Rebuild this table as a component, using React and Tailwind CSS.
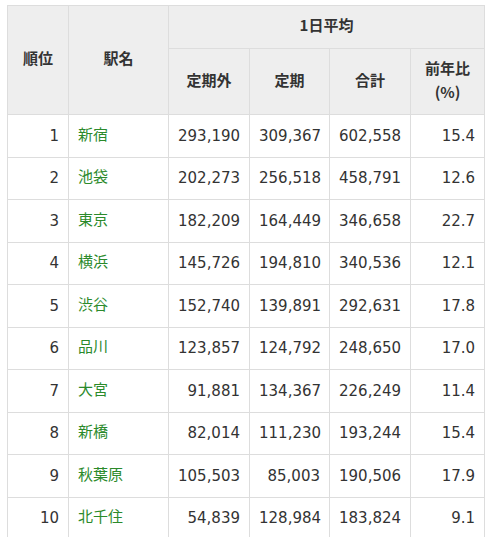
const rows = [
  [1, "新宿", "293,190", "309,367", "602,558", "15.4"],
  [2, "池袋", "202,273", "256,518", "458,791", "12.6"],
  [3, "東京", "182,209", "164,449", "346,658", "22.7"],
  [4, "横浜", "145,726", "194,810", "340,536", "12.1"],
  [5, "渋谷", "152,740", "139,891", "292,631", "17.8"],
  [6, "品川", "123,857", "124,792", "248,650", "17.0"],
  [7, "大宮", "91,881", "134,367", "226,249", "11.4"],
  [8, "新橋", "82,014", "111,230", "193,244", "15.4"],
  [9, "秋葉原", "105,503", "85,003", "190,506", "17.9"],
  [10, "北千住", "54,839", "128,984", "183,824", "9.1"],
];

const th = "border border-[#dddddd] bg-[#eeeeee] font-bold text-center align-middle pb-[4px]";
const td = "border border-[#dddddd] px-[9px] align-middle h-[42.5px]";

export default function App() {
  return (
    <div className="w-[490px] h-[537px] overflow-hidden bg-white pl-[7px] pt-[5px] text-[15px] leading-[24px] text-[#333333] font-['DejaVu_Sans','Noto_Sans_CJK_JP',sans-serif]">
      <table className="table-fixed border-collapse w-[477px]">
        <colgroup>
          <col className="w-[61px]" />
          <col className="w-[100px]" />
          <col className="w-[81px]" />
          <col className="w-[80px]" />
          <col className="w-[81px]" />
          <col className="w-[74px]" />
        </colgroup>
        <thead className="font-['Noto_Sans_CJK_JP',sans-serif] text-[15px]">
          <tr className="h-[43px]">
            <th rowSpan={2} className={th}>順位</th>
            <th rowSpan={2} className={th}>駅名</th>
            <th colSpan={4} className={th}>1日平均</th>
          </tr>
          <tr className="h-[66px]">
            <th className={th}>定期外</th>
            <th className={th}>定期</th>
            <th className={th}>合計</th>
            <th className={th}>
              前年比
              <br />
              (%)
            </th>
          </tr>
        </thead>
        <tbody>
          {rows.map((r) => (
            <tr key={r[0]}>
              <td className={`${td} text-right`}>{r[0]}</td>
              <td className={`${td} pb-[4px] text-left text-[#2b8a2b] font-['Noto_Sans_CJK_JP',sans-serif]`}>{r[1]}</td>
              <td className={`${td} text-right`}>{r[2]}</td>
              <td className={`${td} text-right`}>{r[3]}</td>
              <td className={`${td} text-right`}>{r[4]}</td>
              <td className={`${td} text-right`}>{r[5]}</td>
            </tr>
          ))}
        </tbody>
      </table>
    </div>
  );
}
